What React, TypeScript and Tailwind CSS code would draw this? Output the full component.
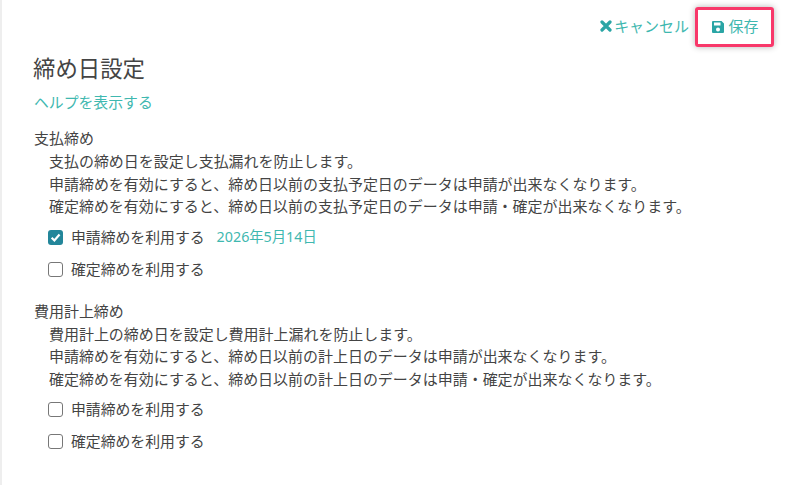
function Check({ label, checked, date }: { label: string; checked?: boolean; date?: string }) {
  return (
    <label className="flex items-center h-[32px] pl-[14px] text-[14.85px]">
      {checked ? (
        <span className="w-[15px] h-[15px] rounded-[3px] bg-[#23869a] flex items-center justify-center">
          <svg width="11" height="11" viewBox="0 0 12 12" fill="none">
            <path d="M1.8 6.2 4.8 9.2 10.4 2.8" stroke="#fff" strokeWidth="2.4" />
          </svg>
        </span>
      ) : (
        <span className="w-[15px] h-[15px] rounded-[3px] border border-[#777] bg-white" />
      )}
      <span className="ml-[8px]">{label}</span>
      {date && <span className="ml-[12px] text-[14.3px] text-[#3fb8b0]">{date}</span>}
    </label>
  );
}

function Section({ title, lines, date }: { title: string; lines: string[]; date?: string }) {
  return (
    <section>
      <div className="h-[24px] leading-[24px]">{title}</div>
      <div className="pl-[15px]">
        {lines.map((l) => (
          <p key={l} className="h-[22.5px] leading-[22.5px]">{l}</p>
        ))}
      </div>
      <div className="mt-[3.5px]">
        <Check label="申請締めを利用する" checked={!!date} date={date} />
        <Check label="確定締めを利用する" />
      </div>
    </section>
  );
}

export default function App() {
  return (
    <div
      className="w-[800px] h-[485px] overflow-hidden bg-white border-l-2 border-[#eeeeee] text-[#444] text-[14.97px] pl-[32px] pr-[26px]"
      style={{ fontFamily: '"Noto Sans", "Noto Sans CJK JP", sans-serif' }}
    >
      <div className="flex justify-end items-center pt-[6px] h-[47px] text-[#3fb8b0]">
        <button className="flex items-center mr-[6px]">
          <svg width="12" height="12" viewBox="0 0 12 12" className="mr-[2px]">
            <path d="M2 2 10 10M10 2 2 10" stroke="#2aa5a5" strokeWidth="3.2" strokeLinecap="round" />
          </svg>
          <span>キャンセル</span>
        </button>
        <button className="flex items-center justify-center w-[79px] h-[40px] rounded-[3px] border-[3px] border-[#f8386a] shadow-[0_0_6px_rgba(0,0,0,0.3)]">
          <svg width="14" height="14" viewBox="0 0 14 14" className="mr-[4px]">
            <path fillRule="evenodd" fill="#2aa5a5" d="M2 1h8.5L13 3.5V12a1 1 0 0 1-1 1H2a1 1 0 0 1-1-1V2a1 1 0 0 1 1-1Zm1 1.5V5.5h6.5V2.5H3ZM7 7.5a2 2 0 1 0 0 4 2 2 0 0 0 0-4Z" />
          </svg>
          <span>保存</span>
        </button>
      </div>
      <h1 className="text-[22.4px] leading-[32px] mt-[6px] -ml-px">締め日設定</h1>
      <a className="block text-[#3fb8b0] text-[14.85px] leading-[24px] mt-[5px]">ヘルプを表示する</a>
      <div className="mt-[12px] flex flex-col gap-[13.5px]">
        <Section
          title="支払締め"
          date="2026年5月14日"
          lines={[
            "支払の締め日を設定し支払漏れを防止します。",
            "申請締めを有効にすると、締め日以前の支払予定日のデータは申請が出来なくなります。",
            "確定締めを有効にすると、締め日以前の支払予定日のデータは申請・確定が出来なくなります。",
          ]}
        />
        <Section
          title="費用計上締め"
          lines={[
            "費用計上の締め日を設定し費用計上漏れを防止します。",
            "申請締めを有効にすると、締め日以前の計上日のデータは申請が出来なくなります。",
            "確定締めを有効にすると、締め日以前の計上日のデータは申請・確定が出来なくなります。",
          ]}
        />
      </div>
    </div>
  );
}
